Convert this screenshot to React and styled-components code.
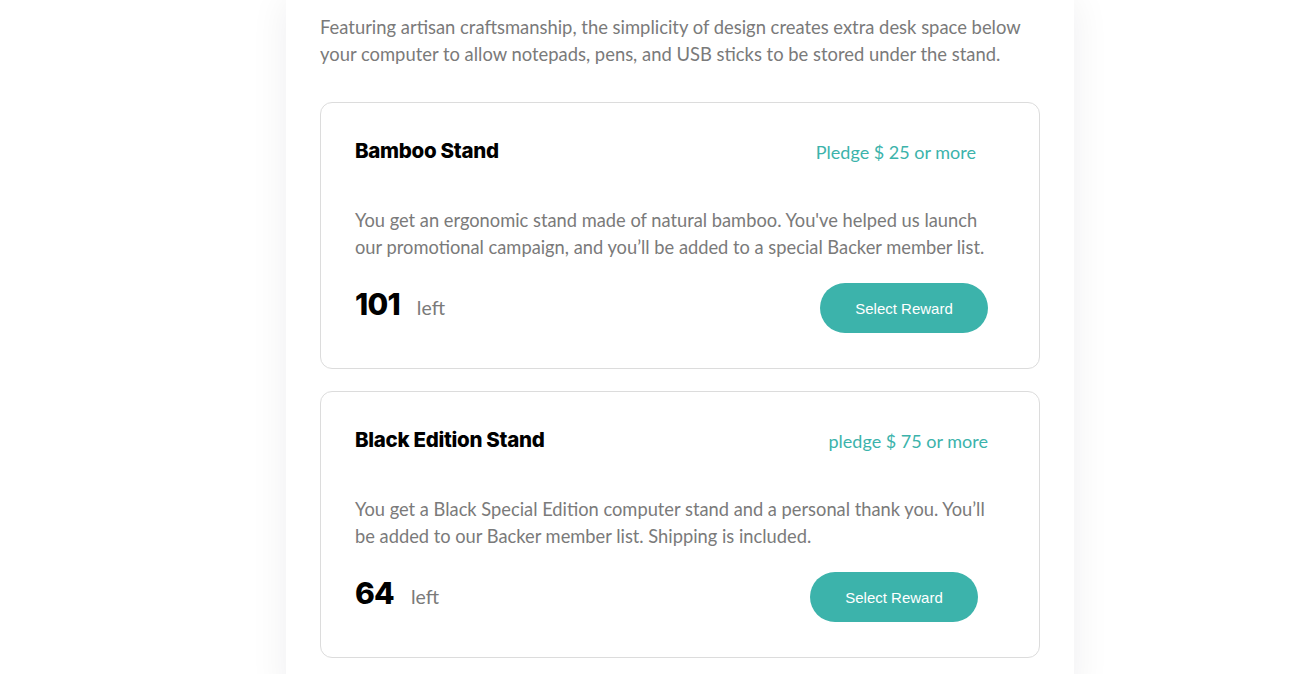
import React from "react";
import styled, { createGlobalStyle } from "styled-components";

const Global = createGlobalStyle`
  html, body { margin: 0; padding: 0; background: #ffffff; }
  body { font-family: "Lato", "Liberation Sans", sans-serif; overflow: hidden; }
`;

const Page = styled.div`
  display: flex;
  padding-left: 286px;
  min-height: 674px;
`;

const Panel = styled.section`
  width: 788px;
  box-sizing: border-box;
  padding: 14px 34px 40px;
  background: #fff;
  box-shadow: 0 0 36px rgba(20, 20, 40, 0.07);
  display: flex;
  flex-direction: column;
  gap: 34px;
`;

const Lead = styled.p`
  margin: 0;
  font-size: 18.4px;
  line-height: 27px;
  color: #7a7a7a;
`;

const Cards = styled.div`
  display: flex;
  flex-direction: column;
  gap: 22px;
`;

const Card = styled.article`
  border: 1px solid #dcdcdc;
  border-radius: 12px;
  padding: 34px 34px 35px;
  display: flex;
  flex-direction: column;
`;

const Header = styled.header`
  display: flex;
  align-items: center;
  justify-content: space-between;
  height: 26px;
`;

const Title = styled.h3`
  margin: 0;
  font-family: "Inter", "Liberation Sans", sans-serif;
  font-weight: 800;
  font-size: 20.5px;
  letter-spacing: -0.3px;
  color: #000;
`;

const Pledge = styled.span`
  font-size: 18px;
  color: #3cb3ab;
  margin-right: ${(p) => p.$inset}px;
  margin-top: 3px;
`;

const Desc = styled.p`
  margin: 44px 0 0;
  font-size: 18.3px;
  line-height: 27px;
  color: #7a7a7a;
`;

const Footer = styled.footer`
  margin-top: 22px;
  display: flex;
  align-items: center;
  justify-content: space-between;
`;

const Stock = styled.div`
  display: flex;
  align-items: baseline;
  gap: 17px;
  margin-top: -9px;
`;

const Count = styled.span`
  font-family: "Inter", "Liberation Sans", sans-serif;
  font-weight: 800;
  font-size: 30px;
  letter-spacing: -0.8px;
  color: #000;
`;

const Left = styled.span`
  font-size: 19.5px;
  color: #7a7a7a;
`;

const Button = styled.button`
  width: 168px;
  height: 50px;
  border: none;
  border-radius: 25px;
  background: #3cb3ab;
  color: #fff;
  font-family: "Liberation Sans", Arial, sans-serif;
  font-size: 15px;
  margin-right: ${(p) => p.$inset}px;
  cursor: pointer;
`;

const rewards = [
  {
    title: "Bamboo Stand",
    pledge: "Pledge $ 25 or more",
    pledgeInset: 29,
    desc: "You get an ergonomic stand made of natural bamboo. You've helped us launch our promotional campaign, and you’ll be added to a special Backer member list.",
    left: 101,
    buttonInset: 17,
  },
  {
    title: "Black Edition Stand",
    pledge: "pledge $ 75 or more",
    pledgeInset: 17,
    desc: "You get a Black Special Edition computer stand and a personal thank you. You’ll be added to our Backer member list. Shipping is included.",
    left: 64,
    buttonInset: 27,
  },
];

export default function App() {
  return (
    <>
      <Global />
      <Page>
        <Panel>
          <Lead>
            Featuring artisan craftsmanship, the simplicity of design creates extra desk space below your computer to allow notepads, pens, and USB sticks to be stored under the stand.
          </Lead>
          <Cards>
            {rewards.map((r) => (
              <Card key={r.title}>
                <Header>
                  <Title>{r.title}</Title>
                  <Pledge $inset={r.pledgeInset}>{r.pledge}</Pledge>
                </Header>
                <Desc>{r.desc}</Desc>
                <Footer>
                  <Stock>
                    <Count>{r.left}</Count>
                    <Left>left</Left>
                  </Stock>
                  <Button $inset={r.buttonInset}>Select Reward</Button>
                </Footer>
              </Card>
            ))}
          </Cards>
        </Panel>
      </Page>
    </>
  );
}
